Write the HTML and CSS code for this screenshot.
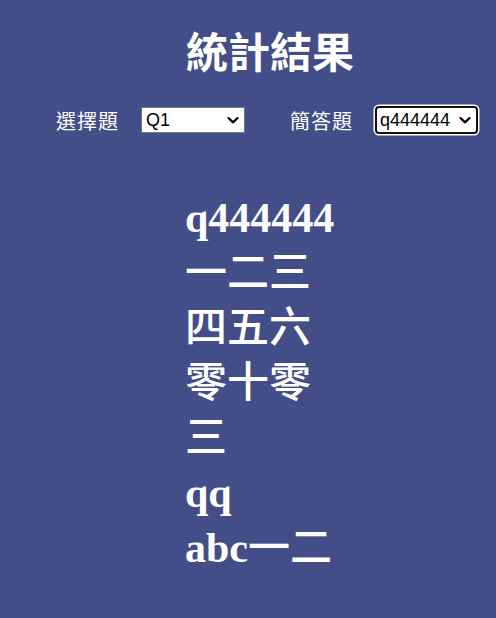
FILE: index.html
```html
<!DOCTYPE html>
<html lang="zh-Hant">
<head>
<meta charset="utf-8">
<title>統計結果</title>
<link rel="stylesheet" href="styles.css">
</head>
<body>
<div class="page">
  <h1 class="title">統計結果</h1>
  <div class="controls">
    <label class="label" for="choice">選擇題</label>
    <span class="select-wrap">
      <select id="choice" class="picker">
        <option>Q1</option>
      </select>
      <svg class="chevron" width="12" height="7" viewBox="0 0 12 7"><polyline points="1.5,1.2 6,5.5 10.5,1.2" fill="none" stroke="#000" stroke-width="2.2" stroke-linecap="round" stroke-linejoin="round"/></svg>
    </span>
    <label class="label label-second" for="short">簡答題</label>
    <span class="select-wrap select-wrap-focus">
      <select id="short" class="picker picker-focus">
        <option>q444444</option>
      </select>
      <svg class="chevron" width="12" height="7" viewBox="0 0 12 7"><polyline points="1.5,1.2 6,5.5 10.5,1.2" fill="none" stroke="#000" stroke-width="2.2" stroke-linecap="round" stroke-linejoin="round"/></svg>
    </span>
  </div>
  <ul class="answers">
    <li>q444444</li>
    <li><span class="cjk">一二三</span></li>
    <li><span class="cjk">四五六</span></li>
    <li><span class="cjk">零十零</span></li>
    <li><span class="cjk">三</span></li>
    <li>qq</li>
    <li>abc<span class="cjk">一二</span></li>
  </ul>
</div>
</body>
</html>
```

FILE: styles.css
```css
html, body {
  margin: 0;
  padding: 0;
  background: #434e88;
  height: 100%;
}

.page {
  display: flex;
  flex-direction: column;
  color: #ffffff;
  font-family: "Noto Sans CJK TC", sans-serif;
}

.title {
  margin: 16px 0 0 44px;
  text-align: center;
  font-size: 42px;
  font-weight: bold;
  line-height: 68px;
}

.controls {
  display: flex;
  align-items: center;
  margin-top: 20px;
  padding-left: 56px;
  height: 32px;
}

.label {
  font-size: 20px;
  letter-spacing: 1px;
}

.label-second {
  margin-left: 45px;
}

.select-wrap {
  position: relative;
  display: inline-flex;
  margin-left: 22px;
}

.select-wrap-focus {
  margin-left: 22px;
}

.picker {
  -webkit-appearance: none;
  appearance: none;
  width: 104px;
  height: 26px;
  font-family: "Liberation Sans", Arial, sans-serif;
  font-size: 18px;
  color: #000;
  background: #fff;
  border: 1px solid #767676;
  border-radius: 0;
  padding: 0 20px 0 4px;
  margin: 0;
}

.picker-focus {
  width: 103px;
  height: 28px;
  border: 2px solid #111111;
  border-radius: 4px;
  padding: 0 20px 0 3px;
  box-shadow: 0 0 0 1.5px #ffffff;
  outline: none;
}

.chevron {
  position: absolute;
  right: 6px;
  top: 50%;
  transform: translateY(-45%);
  pointer-events: none;
}

.select-wrap-focus .chevron {
  right: 7px;
}

.answers {
  list-style: none;
  margin: 55px 0 0 185px;
  padding: 0;
  font-family: "Liberation Serif", "Noto Sans CJK TC", serif;
  font-size: 42px;
  font-weight: bold;
  line-height: 55px;
}

.cjk {
  font-family: "Noto Sans CJK TC", sans-serif;
  font-weight: 500;
  line-height: 1;
}
```
